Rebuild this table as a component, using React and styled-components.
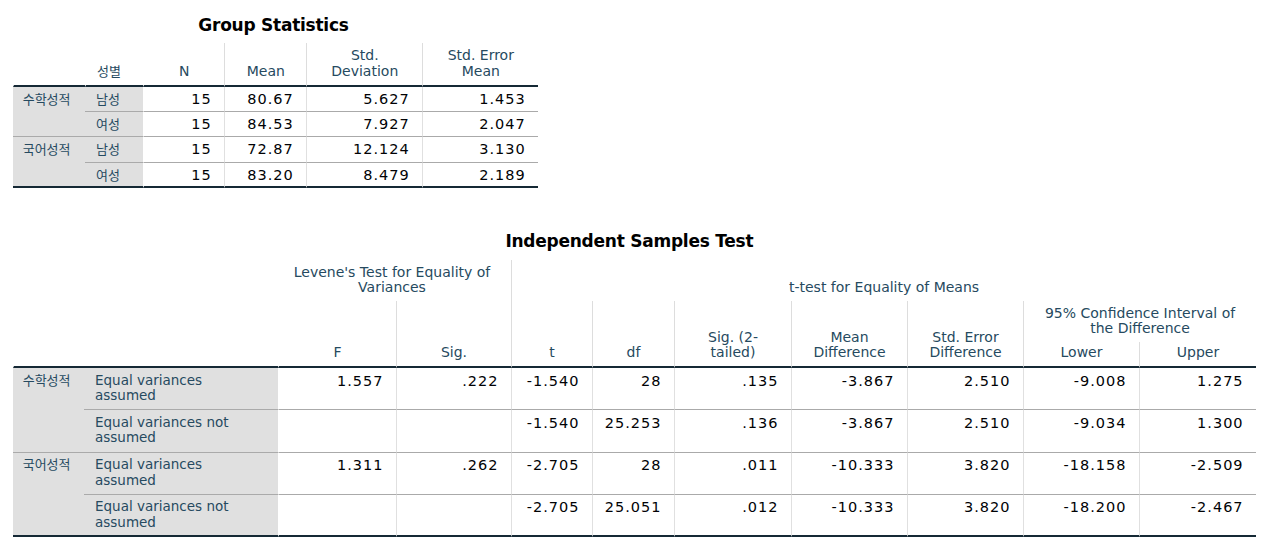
import React from "react";
import styled, { createGlobalStyle } from "styled-components";

const GlobalStyle = createGlobalStyle`
  html, body { margin: 0; padding: 0; background: #ffffff; }
  body {
    font-family: "DejaVu Sans", "Noto Sans CJK KR", sans-serif;
    color: #010205;
  }
`;

const Page = styled.div`
  display: flex;
  flex-direction: column;
  align-items: flex-start;
  gap: 43px;
  padding: 15px 0 0 12.7px;
`;

const Pivot = styled.section`
  display: flex;
  flex-direction: column;
  align-items: center;
  gap: ${(p) => p.$gap}px;
`;

const Title = styled.h2`
  margin: 0;
  padding-right: ${(p) => p.$shift || 0}px;
  font-family: "DejaVu Sans", sans-serif;
  font-weight: bold;
  font-size: 17px;
  letter-spacing: -0.25px;
  line-height: 20px;
  color: #000000;
  white-space: nowrap;
`;

const Table = styled.table`
  border-collapse: separate;
  border-spacing: 0;
  table-layout: fixed;
  font-size: 13.5px;
  line-height: 15.5px;
`;

const Row = styled.tr`
  height: ${(p) => p.$h}px;
`;

const Head = styled.th`
  font-weight: normal;
  color: #264a60;
  text-align: ${(p) => p.$align || "center"};
  vertical-align: bottom;
  padding: 0 ${(p) => p.$pr || 4}px 5.5px ${(p) => (p.$align === "left" ? "11px" : "4px")};
  border-left: 1px solid ${(p) => (p.$line ? "#dddddd" : "transparent")};
  border-bottom: ${(p) => (p.$rule ? "2px solid #152935" : "none")};
  white-space: nowrap;
  font-size: ${(p) => (p.$ko ? "13px" : "14px")};
`;

const Label = styled.td`
  background: #e0e0e0;
  color: #264a60;
  text-align: left;
  vertical-align: top;
  padding: ${(p) => p.$pt}px 6px 0 ${(p) => p.$pl}px;
  font-size: ${(p) => (p.$ko ? "13px" : "13.5px")};
  white-space: nowrap;
  border-bottom: ${(p) =>
    p.$last ? "2px solid #152935" : "1px solid #aaaaaa"};
`;

const Num = styled.td`
  background: #ffffff;
  color: #010205;
  text-align: right;
  vertical-align: top;
  font-size: 14.5px;
  letter-spacing: 1px;
  padding: ${(p) => p.$pt}px 12.5px 0 4px;
  white-space: nowrap;
  border-left: 1px solid ${(p) => (p.$line ? "#e0e0e0" : "transparent")};
  border-bottom: ${(p) =>
    p.$last ? "2px solid #152935" : "1px solid #aaaaaa"};
`;

/* ---------- Group Statistics ---------- */

const groupCols = [72.3, 58.3, 81, 82, 116, 116];

const groupData = [
  {
    subject: "수학성적",
    rows: [
      ["남성", "15", "80.67", "5.627", "1.453"],
      ["여성", "15", "84.53", "7.927", "2.047"],
    ],
  },
  {
    subject: "국어성적",
    rows: [
      ["남성", "15", "72.87", "12.124", "3.130"],
      ["여성", "15", "83.20", "8.479", "2.189"],
    ],
  },
];

function GroupStatistics() {
  return (
    <Pivot $gap={8.3}>
      <Title $shift={4}>Group Statistics</Title>
      <Table style={{ width: groupCols.reduce((a, b) => a + b, 0) }}>
        <colgroup>
          {groupCols.map((w, i) => (
            <col key={i} style={{ width: w }} />
          ))}
        </colgroup>
        <thead>
          <Row $h={43.4}>
            <Head $rule />
            <Head $rule $align="left" $ko>
              성별
            </Head>
            <Head $rule>N</Head>
            <Head $rule $line>
              Mean
            </Head>
            <Head $rule $line>
              Std.
              <br />
              Deviation
            </Head>
            <Head $rule $line>
              Std. Error
              <br />
              Mean
            </Head>
          </Row>
        </thead>
        <tbody>
          {groupData.map((g, gi) =>
            g.rows.map((r, ri) => {
              const last = gi === groupData.length - 1 && ri === g.rows.length - 1;
              return (
                <Row $h={25.3} key={`${gi}-${ri}`}>
                  {ri === 0 && (
                    <Label
                      rowSpan={2}
                      $ko
                      $pt={5}
                      $pl={10}
                      $last={gi === groupData.length - 1}
                    >
                      {g.subject}
                    </Label>
                  )}
                  <Label $ko $pt={5} $pl={11} $last={last}>
                    {r[0]}
                  </Label>
                  <Num $pt={5} $last={last}>
                    {r[1]}
                  </Num>
                  <Num $pt={5} $line $last={last}>
                    {r[2]}
                  </Num>
                  <Num $pt={5} $line $last={last}>
                    {r[3]}
                  </Num>
                  <Num $pt={5} $line $last={last}>
                    {r[4]}
                  </Num>
                </Row>
              );
            })
          )}
        </tbody>
      </Table>
    </Pivot>
  );
}

/* ---------- Independent Samples Test ---------- */

const testCols = [71.3, 194, 118, 115, 81, 82, 117, 116, 116, 116, 117];

const testData = [
  {
    subject: "수학성적",
    rows: [
      {
        label: ["Equal variances", "assumed"],
        values: ["1.557", ".222", "-1.540", "28", ".135", "-3.867", "2.510", "-9.008", "1.275"],
      },
      {
        label: ["Equal variances not", "assumed"],
        values: ["", "", "-1.540", "25.253", ".136", "-3.867", "2.510", "-9.034", "1.300"],
      },
    ],
  },
  {
    subject: "국어성적",
    rows: [
      {
        label: ["Equal variances", "assumed"],
        values: ["1.311", ".262", "-2.705", "28", ".011", "-10.333", "3.820", "-18.158", "-2.509"],
      },
      {
        label: ["Equal variances not", "assumed"],
        values: ["", "", "-2.705", "25.051", ".012", "-10.333", "3.820", "-18.200", "-2.467"],
      },
    ],
  },
];

function IndependentSamplesTest() {
  return (
    <Pivot $gap={9.5}>
      <Title $shift={10}>Independent Samples Test</Title>
      <Table style={{ width: testCols.reduce((a, b) => a + b, 0) }}>
        <colgroup>
          {testCols.map((w, i) => (
            <col key={i} style={{ width: w }} />
          ))}
        </colgroup>
        <thead>
          <Row $h={40.7}>
            <Head colSpan={2} rowSpan={3} $rule />
            <Head colSpan={2} $pr={10}>
              Levene's Test for Equality of
              <br />
              Variances
            </Head>
            <Head colSpan={7} $line>
              t-test for Equality of Means
            </Head>
          </Row>
          <Row $h={41}>
            <Head rowSpan={2} $rule>
              F
            </Head>
            <Head rowSpan={2} $rule $line>
              Sig.
            </Head>
            <Head rowSpan={2} $rule $line>
              t
            </Head>
            <Head rowSpan={2} $rule $line>
              df
            </Head>
            <Head rowSpan={2} $rule $line>
              Sig. (2-
              <br />
              tailed)
            </Head>
            <Head rowSpan={2} $rule $line>
              Mean
              <br />
              Difference
            </Head>
            <Head rowSpan={2} $rule $line>
              Std. Error
              <br />
              Difference
            </Head>
            <Head colSpan={2} $line>
              95% Confidence Interval of
              <br />
              the Difference
            </Head>
          </Row>
          <Row $h={26}>
            <Head $rule $line>
              Lower
            </Head>
            <Head $rule $line>
              Upper
            </Head>
          </Row>
        </thead>
        <tbody>
          {testData.map((g, gi) =>
            g.rows.map((r, ri) => {
              const last = gi === testData.length - 1 && ri === g.rows.length - 1;
              return (
                <Row $h={42.3} key={`${gi}-${ri}`}>
                  {ri === 0 && (
                    <Label
                      rowSpan={2}
                      $ko
                      $pt={4.5}
                      $pl={10}
                      $last={gi === testData.length - 1}
                    >
                      {g.subject}
                    </Label>
                  )}
                  <Label $pt={4.5} $pl={11} $last={last}>
                    {r.label[0]}
                    <br />
                    {r.label[1]}
                  </Label>
                  {r.values.map((v, vi) => (
                    <Num key={vi} $pt={5.5} $line={vi > 0} $last={last}>
                      {v}
                    </Num>
                  ))}
                </Row>
              );
            })
          )}
        </tbody>
      </Table>
    </Pivot>
  );
}

export default function App() {
  return (
    <>
      <GlobalStyle />
      <Page>
        <GroupStatistics />
        <IndependentSamplesTest />
      </Page>
    </>
  );
}
